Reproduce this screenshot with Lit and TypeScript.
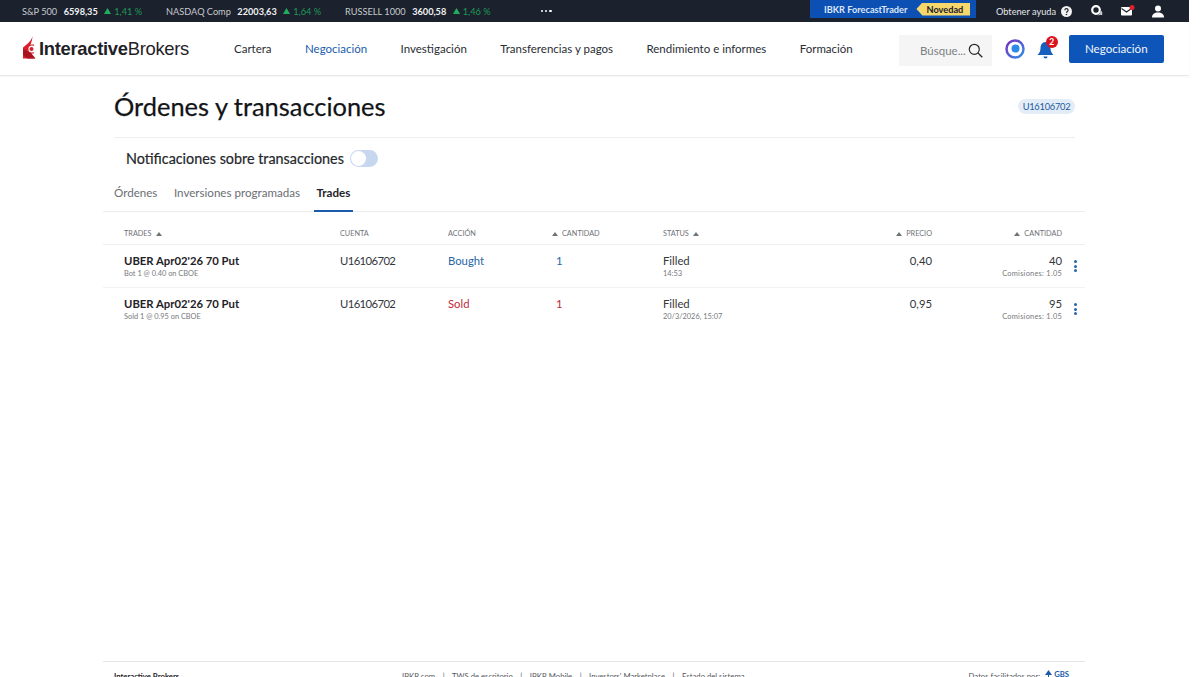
import { LitElement, html, css } from "lit";
import { customElement } from "lit/decorators.js";

const up = html`<svg class="tri" width="6" height="4" viewBox="0 0 6 4"><path d="M3 0 6 4H0z" fill="currentColor"/></svg>`;

const rows = [
  { name: "UBER Apr02'26 70 Put", sub: "Bot 1 @ 0.40 on CBOE", action: "Bought", cls: "buy", time: "14:53", price: "0,40", amount: "40" },
  { name: "UBER Apr02'26 70 Put", sub: "Sold 1 @ 0.95 on CBOE", action: "Sold", cls: "sell", time: "20/3/2026, 15:07", price: "0,95", amount: "95" },
];

@customElement("app-root")
export class AppRoot extends LitElement {
  static styles = css`
    :host { display: flex; flex-direction: column; height: 677px; overflow: hidden; background: #fff; font-family: "Lato", "Open Sans", sans-serif; color: #1f2227; }
    * { box-sizing: border-box; }
    .top { height: 22px; margin-right: 11px; background: #1b212d; color: #fff; display: flex; align-items: center; font-size: 9.2px; padding-left: 22px; flex: none; white-space: nowrap; }
    .tick { display: flex; align-items: center; gap: 6.5px; margin-right: 24px; color: #c6c9ce; }
    .tick b { color: #f0f1f3; font-weight: 700; }
    .tick i { font-style: normal; color: #1d9a55; display: flex; align-items: center; gap: 3px; }
    .more { display: flex; gap: 2px; margin-left: 26px; }
    .more span { width: 2.4px; height: 2.4px; background: #fff; border-radius: 50%; }
    .grow { flex: 1; }
    .promo { width: 166px; height: 18px; margin-top: -4px; background: #0d50b4; display: flex; align-items: center; padding-left: 14px; font-weight: 700; color: #dbe6f7; }
    .promo .tag { margin-left: 9px; height: 13px; width: 54px; background: #f5d76c; color: #1b212d; font-weight: 700; display: flex; align-items: center; justify-content: center; clip-path: polygon(6px 0, 100% 0, 100% 100%, 6px 100%, 0 50%); padding-left: 3px; }
    .help { display: flex; align-items: center; gap: 5px; margin-left: 20px; color: #e6e7ea; }
    .ticons { display: flex; align-items: center; gap: 17px; margin-left: 19px; margin-right: 25px; }
    .ticons svg { display: block; }

    .nav { height: 54px; flex: none; display: flex; align-items: center; padding-left: 22px; margin-right: 11px; border-bottom: 1px solid #e6e7e9; box-shadow: 0 1px 2px rgba(0,0,0,.04); white-space: nowrap; }
    .logo { display: flex; align-items: center; gap: 3px; width: 212px; flex: none; }
    .word { font-family: "Liberation Sans", sans-serif; font-size: 18.4px; letter-spacing: -.3px; color: #1f2227; font-weight: 700; }
    .word span { font-weight: 400; }
    .links { display: flex; gap: 33.4px; font-size: 11.5px; color: #2a2d33; }
    .links .on { color: #1a5cab; }
    .search { width: 93px; height: 31px; margin: 3px 0 0 46px; background: #f5f5f5; display: flex; align-items: center; justify-content: flex-end; gap: 2px; padding-right: 9px; font-size: 11.5px; color: #7d7f84; flex: none; }
    .orb { margin-left: 13px; display: block; flex: none; }
    .bell { position: relative; margin-left: 12px; width: 20px; height: 22px; flex: none; }
    .badge { position: absolute; top: -2px; left: 9px; width: 12px; height: 12px; border-radius: 50%; background: #d9141e; color: #fff; font-size: 8.5px; font-weight: 700; display: flex; align-items: center; justify-content: center; }
    .cta { margin-left: 12px; width: 95px; height: 28px; background: #0d55b8; color: #f2f6fc; border-radius: 2px; display: flex; align-items: center; justify-content: center; font-size: 11.6px; flex: none; }

    main { flex: 1; width: 982px; margin-left: 103px; display: flex; flex-direction: column; min-height: 0; }
    .head { height: 62px; flex: none; margin-left: 11px; margin-right: 10px; display: flex; justify-content: space-between; align-items: center; border-bottom: 1px solid #eeeeef; }
    h1 { margin: 0; font-size: 25.4px; font-weight: 400; color: #121417; position: relative; top: -1px; -webkit-text-stroke: .25px #121417; }
    .acct { background: #e3edf8; color: #1d5a9f; font-size: 9.3px; letter-spacing: -.25px; border-radius: 8px; height: 15px; width: 57px; display: flex; align-items: center; justify-content: center; margin-top: -1px; }
    .notif { height: 41px; flex: none; padding-left: 23px; display: flex; align-items: center; gap: 6px; font-size: 14.35px; color: #24272c; -webkit-text-stroke: .2px #24272c; }
    .toggle { width: 28px; height: 17px; border-radius: 9px; background: #c7d7ef; position: relative; margin-top: -1px; }
    .toggle::after { content: ""; position: absolute; left: 1px; top: 1px; width: 15px; height: 15px; border-radius: 50%; background: #fff; }
    .tabs { height: 33px; flex: none; padding-left: 8px; display: flex; gap: 10.5px; font-size: 11.6px; color: #6b6e73; border-bottom: 1px solid #eceded; }
    .tab { padding: 0 3px 6px; height: 33px; display: flex; align-items: center; }
    .tab.on { color: #1f2227; font-weight: 700; border-bottom: 2px solid #1a5cab; padding-bottom: 4px; }

    .grid { display: grid; grid-template-columns: 216px 108px 104px 111px 100px 169px 130px 1fr; padding-left: 21px; flex: none; }
    .thead { height: 33px; align-items: end; padding-bottom: 6px; font-size: 7.3px; color: #6f7277; border-bottom: 1px solid #efeff0; }
    .thead > div { display: flex; align-items: center; gap: 4px; }
    .r { text-align: right; justify-content: flex-end; }
    .tri { display: inline-block; }
    .row { height: 43px; padding-top: 8px; border-bottom: 1px solid #f2f2f3; font-size: 11.3px; color: #33363b; line-height: 16px; }
    .row:last-child { border-bottom: 0; }
    .nm { font-weight: 700; color: #1f2227; }
    .ac { letter-spacing: -.6px; }
    .sm { font-size: 7.4px; line-height: 10px; color: #77797e; }
    .r .sm { letter-spacing: .26px; }
    .buy { color: #2866a8; }
    .sell { color: #c2283c; }
    .qty { padding-left: 4px; }
    .dots { display: flex; flex-direction: column; gap: 1.5px; padding: 7px 0 0 12px; }
    .dots span { width: 3px; height: 3px; border-radius: 50%; background: #2866a8; }

    footer { height: 16px; flex: none; width: 982px; margin-left: 103px; border-top: 1px solid #e4e5e6; display: flex; font-size: 7.7px; color: #55585d; padding: 9px 16px 0 11px; line-height: 10px; white-space: nowrap; }
    .fb { width: 288px; font-weight: 700; color: #1f2227; }
    .flinks { display: flex; gap: 7.5px; color: #55585d; }
    .credit { margin-left: auto; display: flex; gap: 5px; }
    .credit b { color: #1a5cab; display: flex; gap: 2px; align-items: center; }
  `;

  render() {
    return html`
      <div class="top">
        ${[["S&P 500", "6598,35", "1,41 %"], ["NASDAQ Comp", "22003,63", "1,64 %"], ["RUSSELL 1000", "3600,58", "1,46 %"]].map(
          ([a, b, c]) => html`<div class="tick"><span>${a}</span><b>${b}</b><i><svg width="7" height="6" viewBox="0 0 7 6"><path d="M3.5 0 7 6H0z" fill="#1fae5e"/></svg>${c}</i></div>`
        )}
        <div class="more"><span></span><span></span><span></span></div>
        <div class="grow"></div>
        <div class="promo">IBKR ForecastTrader<span class="tag">Novedad</span></div>
        <div class="help">Obtener ayuda
          <svg width="11" height="11" viewBox="0 0 11 11"><circle cx="5.5" cy="5.5" r="5.5" fill="#f2f2f2"/><path d="M3.9 4.2a1.6 1.6 0 1 1 2.5 1.3c-.6.4-.9.6-.9 1.2" fill="none" stroke="#1b212d" stroke-width="1.2"/><circle cx="5.5" cy="8.5" r=".8" fill="#1b212d"/></svg>
        </div>
        <div class="ticons">
          <svg width="12" height="12" viewBox="0 0 12 12"><circle cx="5" cy="5" r="3.8" fill="none" stroke="#fff" stroke-width="2.2"/><path d="M9.8 5.500c1.200.8 1.800 1.800 1.500 3-.1.500-.3 1-.1 1.700-.8 0-1.400-.2-1.900-.4-.9.500-2 .6-3 .2 1.800-.4 3.500-2.200 3.500-4.500z" fill="#c9ccd2"/></svg>
          <svg width="15" height="12" viewBox="0 0 15 12"><rect x="1" y="2" width="11" height="8.5" rx="1" fill="#fff"/><path d="M1.500 3.500 6.500 7l5-3.500" fill="none" stroke="#1b212d" stroke-width="1.1"/><circle cx="12" cy="2.500" r="2.500" fill="#e0212c"/></svg>
          <svg width="12" height="13" viewBox="0 0 12 13"><circle cx="6" cy="3.500" r="3" fill="#fff"/><path d="M0 12.500c0-3.500 2.500-5 6-5s6 1.500 6 5z" fill="#fff"/></svg>
        </div>
      </div>

      <div class="nav">
        <div class="logo">
          <svg width="14" height="24" viewBox="0 0 14 24" style="margin-top:-3px"><path d="M10.500 1C10 5 5.500 9 1 12.500V23.500H13.500L9.500 18.500H12.500V9.500H8.500C9.500 7 10.500 4 10.500 1z" fill="#d81e2a"/><path d="M1 14 8.500 18 13 23.500H5.500L1 20z" fill="#a8131d"/><circle cx="10" cy="14" r="3.600" fill="#fff"/><circle cx="9.500" cy="14" r="2" fill="#d81e2a"/><rect x="12" y="9" width="2" height="10" fill="#fff"/></svg>
          <div class="word">Interactive<span>Brokers</span></div>
        </div>
        <div class="links">
          <span>Cartera</span><span class="on">Negociación</span><span>Investigación</span><span>Transferencias y pagos</span><span>Rendimiento e informes</span><span>Formación</span>
        </div>
        <div class="search">Búsque...
          <svg width="15" height="15" viewBox="0 0 15 15"><circle cx="6.300" cy="6.300" r="5" fill="none" stroke="#26292e" stroke-width="1.200"/><path d="m10 10 4.300 4.300" stroke="#26292e" stroke-width="1.300"/></svg>
        </div>
        <svg class="orb" width="20" height="20" viewBox="0 0 20 20"><defs><linearGradient id="o" x1="0" y1="0" x2="1" y2="1"><stop offset="0" stop-color="#7a2fc0"/><stop offset="1" stop-color="#2f8fe8"/></linearGradient></defs><circle cx="10" cy="10" r="8.500" fill="#fff" stroke="url(#o)" stroke-width="2.500"/><circle cx="10.500" cy="9.500" r="4" fill="#2d8ae6"/></svg>
        <div class="bell">
          <svg width="17" height="19" viewBox="0 0 17 19" style="margin-top:3px"><path d="M8.500 1C5 1 3.500 4 3.500 7.500 3.500 10.500 2 12.500.5 14h16C15 12.500 13.500 10.500 13.500 7.500 13.500 4 12 1 8.500 1z" fill="#1560bd"/><path d="M6.500 15.500h4a2 2 0 0 1-4 0z" fill="#1560bd"/></svg>
          <div class="badge">2</div>
        </div>
        <div class="cta">Negociación</div>
      </div>

      <main>
        <div class="head"><h1>Órdenes y transacciones</h1><div class="acct">U16106702</div></div>
        <div class="notif">Notificaciones sobre transacciones<div class="toggle"></div></div>
        <div class="tabs">
          <div class="tab">Órdenes</div><div class="tab">Inversiones programadas</div><div class="tab on">Trades</div>
        </div>
        <div class="grid thead">
          <div>TRADES ${up}</div><div>CUENTA</div><div>ACCIÓN</div><div>${up} CANTIDAD</div><div>STATUS ${up}</div>
          <div class="r">${up} PRECIO</div><div class="r">${up} CANTIDAD</div><div></div>
        </div>
        ${rows.map((r) => html`
          <div class="grid row">
            <div><div class="nm">${r.name}</div><div class="sm">${r.sub}</div></div>
            <div class="ac">U16106702</div>
            <div class=${r.cls}>${r.action}</div>
            <div class="qty ${r.cls}">1</div>
            <div>Filled<div class="sm">${r.time}</div></div>
            <div class="r">${r.price}</div>
            <div class="r">${r.amount}<div class="sm">Comisiones: 1.05</div></div>
            <div class="dots"><span></span><span></span><span></span></div>
          </div>`)}
      </main>

      <footer>
        <div class="fb">Interactive Brokers</div>
        <div class="flinks"><span>IBKR.com</span><span>|</span><span>TWS de escritorio</span><span>|</span><span>IBKR Mobile</span><span>|</span><span>Investors' Marketplace</span><span>|</span><span>Estado del sistema</span></div>
        <div class="credit">Datos facilitados por: <b><svg width="7" height="8" viewBox="0 0 7 8"><path d="M3.500 0 7 5H4v3H3V5H0z" fill="#1a5cab"/></svg>GBS</b></div>
      </footer>
    `;
  }
}
